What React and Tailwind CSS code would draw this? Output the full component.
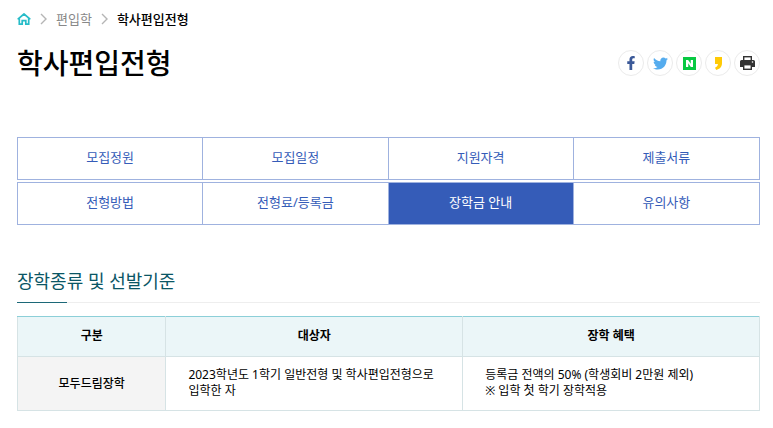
import { FaFacebookF, FaTwitter } from "react-icons/fa";
import { SiNaver } from "react-icons/si";

const tabRows = [
  ["모집정원", "모집일정", "지원자격", "제출서류"],
  ["전형방법", "전형료/등록금", "장학금 안내", "유의사항"],
];

const activeTab = "장학금 안내";

const scholarships = [
  {
    name: "모두드림장학",
    target: "2023학년도 1학기 일반전형 및 학사편입전형으로 입학한 자",
    benefits: ["등록금 전액의 50% (학생회비 2만원 제외)", "※ 입학 첫 학기 장학적용"],
  },
];

function HomeIcon() {
  return (
    <svg width="14" height="12" viewBox="0 0 14 12" fill="none" stroke="#27bcc8" strokeWidth="1.7" aria-hidden="true">
      <path d="M1.200 5.800 7 1l5.800 4.800" strokeLinecap="round" strokeLinejoin="round" />
      <path d="M2.300 5.200v6h2.900V7.600h3.600v3.600h2.900v-6" />
    </svg>
  );
}

function Chevron() {
  return (
    <svg width="7" height="12" viewBox="0 0 7 12" fill="none" stroke="#b5b5b5" strokeWidth="1.4" aria-hidden="true">
      <path d="m1 1 5 5-5 5" />
    </svg>
  );
}

function NaverIcon() {
  return (
    <span className="flex h-[13px] w-[13px] items-center justify-center bg-[#08c942] text-white">
      <SiNaver size={7} />
    </span>
  );
}

function StoryIcon() {
  return (
    <svg width="7" height="13" viewBox="0 0 7 13" fill="#ffca05" aria-hidden="true">
      <path d="M0 0h7v6.300C7 9.800 4.600 12.300 1.200 13L0 10.700C1.800 10 2.800 8.900 2.900 7H0z" />
    </svg>
  );
}

function PrintIcon() {
  return (
    <svg width="15" height="14" viewBox="0 0 15 14" aria-hidden="true">
      <path d="M3 0h9v5H3z" fill="#333" />
      <path d="M4.400 1.400h6.200V4H4.400z" fill="#fff" />
      <path d="M1.500 4h12A1.500 1.500 0 0 1 15 5.500V11H0V5.500A1.500 1.500 0 0 1 1.500 4z" fill="#333" />
      <path d="M3 8h9v6H3z" fill="#333" />
      <path d="M4.400 9.400h6.200v3.200H4.400z" fill="#fff" />
      <circle cx="12.500" cy="6" r=".8" fill="#fff" />
    </svg>
  );
}

const shareButtons = [
  { label: "페이스북", icon: <FaFacebookF size={14} color="#3b5998" /> },
  { label: "트위터", icon: <FaTwitter size={15} color="#55acee" /> },
  { label: "네이버", icon: <NaverIcon /> },
  { label: "카카오스토리", icon: <StoryIcon /> },
  { label: "인쇄", icon: <PrintIcon /> },
];

export default function App() {
  return (
    <main className="bg-white pt-[9px] pr-[13px] pb-4 pl-[17px] font-['Noto_Sans','Noto_Sans_CJK_KR',sans-serif] text-black">
      <nav aria-label="현재 위치" className="flex h-5 items-center gap-[9px] text-[13px] leading-5">
        <a href="#home" aria-label="홈">
          <HomeIcon />
        </a>
        <Chevron />
        <a href="#transfer" className="text-[#888]">편입학</a>
        <Chevron />
        <a href="#bachelor" aria-current="page" className="font-medium">학사편입전형</a>
      </nav>

      <header className="mt-3.5 flex h-10 items-center justify-between">
        <h1 className="text-[28px] leading-10 font-medium">학사편입전형</h1>
        <div className="flex gap-[3px]">
          {shareButtons.map((item) => (
            <button
              key={item.label}
              type="button"
              aria-label={item.label}
              className="flex h-[26px] w-[26px] items-center justify-center rounded-full border border-[#ebebeb]"
            >
              {item.icon}
            </button>
          ))}
        </div>
      </header>

      <nav aria-label="전형 안내" className="mt-[54px] space-y-0.5">
        {tabRows.map((row) => (
          <ul key={row[0]} className="grid grid-cols-4 divide-x divide-[#9fb2df] border border-[#9fb2df] text-[13px] leading-5">
            {row.map((tab) => (
              <li key={tab}>
                <a
                  href="#tab"
                  aria-current={tab === activeTab ? "page" : undefined}
                  className={
                    tab === activeTab
                      ? "block bg-[#355cb8] pt-[9px] pb-3 text-center text-white"
                      : "block pt-[9px] pb-3 text-center text-[#355cb8]"
                  }
                >
                  {tab}
                </a>
              </li>
            ))}
          </ul>
        ))}
      </nav>

      <section className="mt-[43px]">
        <h2 className="relative border-b border-[#eee] pb-2 text-lg leading-[26px] text-[#0a5665] after:absolute after:-bottom-px after:left-0 after:h-px after:w-[50px] after:bg-[#1c6878]">
          장학종류 및 선발기준
        </h2>

        <table className="mt-[13px] w-full table-fixed border-collapse text-xs leading-4">
          <colgroup>
            <col className="w-1/5" />
            <col className="w-2/5" />
            <col className="w-2/5" />
          </colgroup>
          <thead>
            <tr className="bg-[#ebf6f8]">
              {["구분", "대상자", "장학 혜택"].map((head) => (
                <th key={head} scope="col" className="border border-t-[#8ccfd8] border-[#d6e3e5] pt-[11px] pb-3 font-bold">
                  {head}
                </th>
              ))}
            </tr>
          </thead>
          <tbody>
            {scholarships.map((item) => (
              <tr key={item.name}>
                <th scope="row" className="border border-[#d6e3e5] bg-[#f4f4f4] font-medium">
                  {item.name}
                </th>
                <td className="border border-[#d6e3e5] px-[22px] pt-2.5 pb-[11px] break-keep">{item.target}</td>
                <td className="border border-[#d6e3e5] px-[22px] pt-2.5 pb-[11px] break-keep">
                  {item.benefits.map((line) => (
                    <p key={line}>{line}</p>
                  ))}
                </td>
              </tr>
            ))}
          </tbody>
        </table>
      </section>
    </main>
  );
}
